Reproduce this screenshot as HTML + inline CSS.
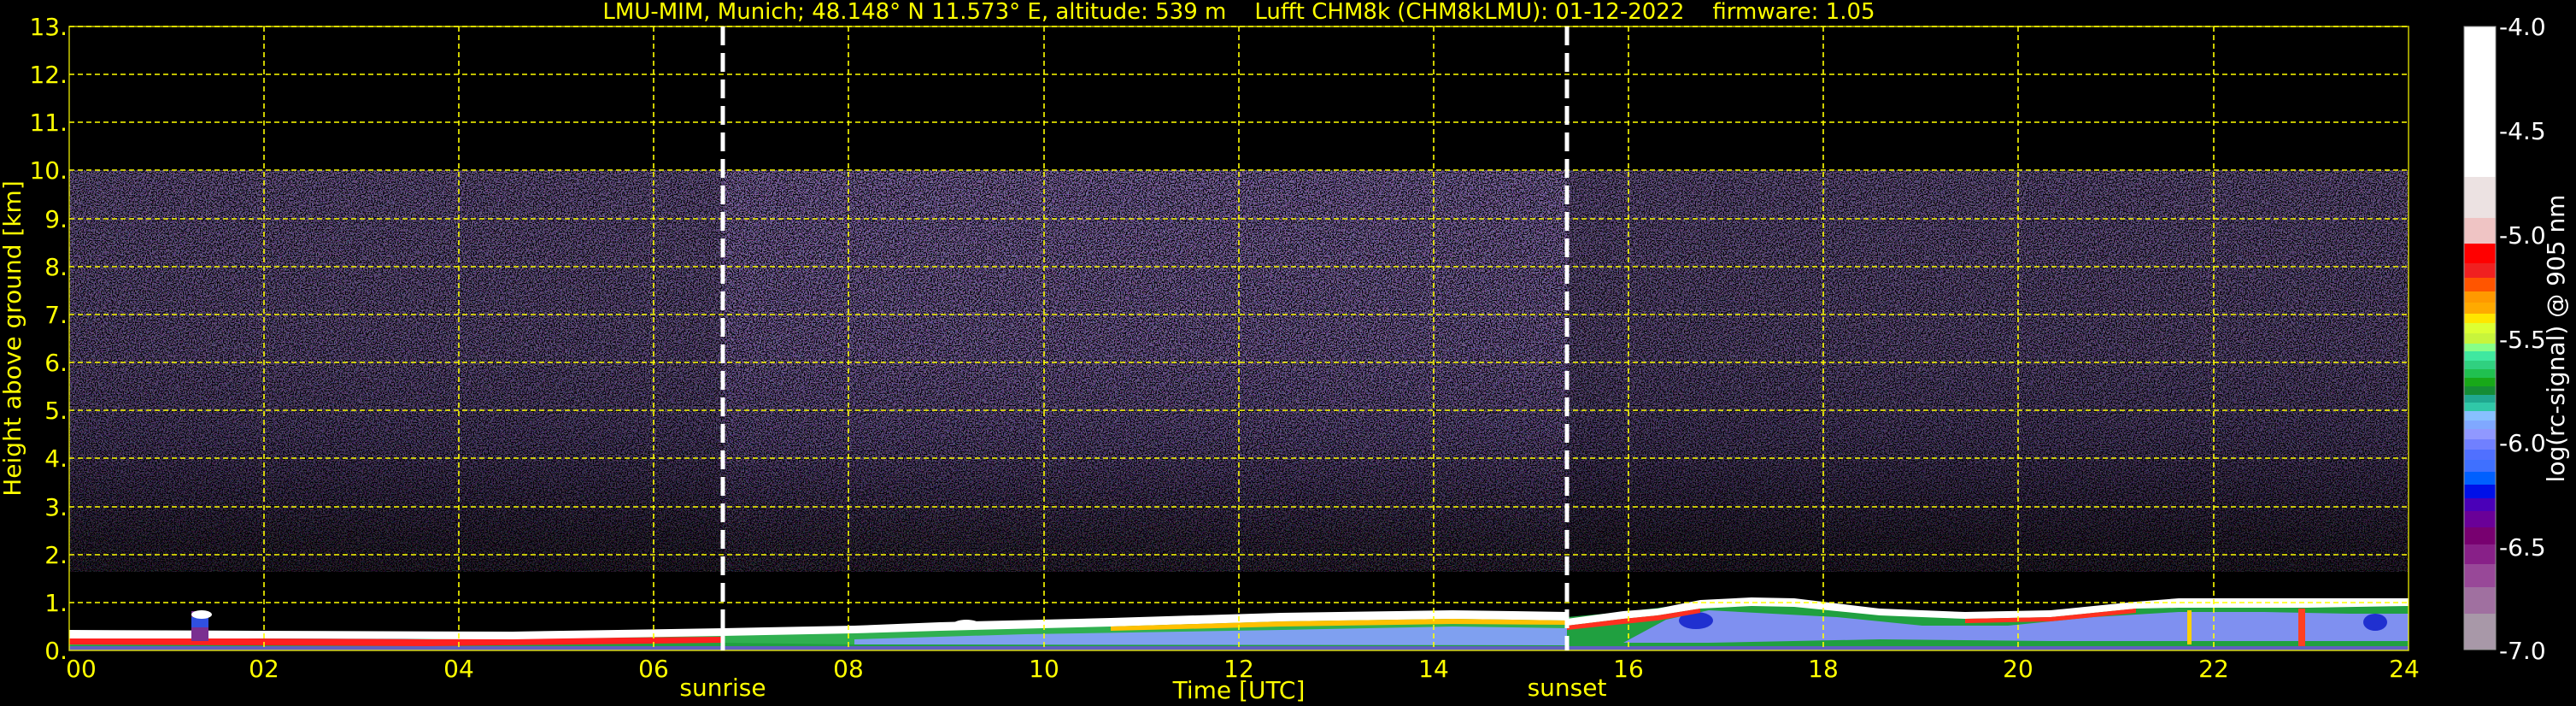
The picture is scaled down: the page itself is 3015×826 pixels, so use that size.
<!DOCTYPE html>
<html><head><meta charset="utf-8"><style>
html,body{margin:0;padding:0;background:#000;}
body{width:3015px;height:826px;overflow:hidden;position:relative;font-family:"DejaVu Sans","Liberation Sans",sans-serif;}
svg{position:absolute;left:0;top:0;}
</style></head><body>
<svg width="3015" height="826" viewBox="0 0 3015 826" xmlns="http://www.w3.org/2000/svg" font-family="DejaVu Sans, Liberation Sans, sans-serif">
<defs>
<linearGradient id="ng" x1="0" y1="0" x2="0" y2="1">
<stop offset="0" stop-color="#6a5890"/>
<stop offset="0.45" stop-color="#5a4a7e"/>
<stop offset="0.66" stop-color="#403460"/>
<stop offset="0.8" stop-color="#221a36"/>
<stop offset="0.92" stop-color="#0a0810"/>
<stop offset="1" stop-color="#000"/>
</linearGradient>
<filter id="sp" x="0" y="0" width="100%" height="100%">
<feTurbulence type="fractalNoise" baseFrequency="0.7" numOctaves="1" seed="5"/>
<feColorMatrix type="matrix" values="0 0 0 0 0  0 0 0 0 0  0 0 0 0 0  9 0 0 0 -4.3"/>
</filter>
<filter id="cs" x="0" y="0" width="100%" height="100%">
<feTurbulence type="fractalNoise" baseFrequency="0.8" numOctaves="1" seed="11"/>
<feColorMatrix type="matrix" values="4 0 0 0 -1.5  0 4 0 0 -1.7  0 0 4 0 -1.3  0 0 0 0 0.5"/>
</filter>
</defs>
<rect x="81" y="199" width="2738" height="470" fill="url(#ng)"/>
<rect x="81" y="199" width="2738" height="470" filter="url(#cs)" opacity="0.5"/>
<rect x="81" y="199" width="2738" height="470" filter="url(#sp)"/>
<rect x="81" y="199" width="765" height="470" fill="#000" opacity="0.15"/>
<rect x="1834" y="199" width="985" height="470" fill="#000" opacity="0.18"/>

<!-- boundary layer: left part -->
<polygon points="81,761 81,748 400,749 700,745 846,742 1000,738 1100,735 1300,730 1500,725 1700,722 1834,724 1834,761" fill="#30b050"/>
<polygon points="1000,761 1000,748 1200,742 1500,737 1700,733 1834,735 1834,761" fill="#7fa0f0"/>
<polygon points="81,761 81,755 846,752 1000,754 1834,755 1834,761" fill="#20a040"/>
<polygon points="81,754 81,746 500,748 846,745 846,752 500,756" fill="#ff2020"/>
<polygon points="81,747 81,737 300,738 600,739 846,735 1000,732 1100,728 1300,723 1500,717 1700,714 1834,716 1834,726 1700,724 1500,727 1300,733 1100,738 1000,741 846,744 600,748 300,747" fill="#ffffff"/>
<polygon points="1300,733 1500,727 1700,724 1834,726 1834,731 1700,730 1500,733 1300,738" fill="#ffc000"/>
<rect x="224" y="715" width="20" height="35" fill="#7a2f90"/>
<rect x="224" y="722" width="20" height="12" fill="#3050e0"/>
<ellipse cx="236" cy="719" rx="12" ry="5" fill="#fff"/>
<ellipse cx="1131" cy="731" rx="16" ry="6" fill="#fff"/>
<!-- right part -->
<polygon points="1834,761 1834,722 1900,716 1950,710 1990,706 2050,704 2100,705 2200,718 2300,722 2400,720 2500,710 2550,705 2700,705 2819,705 2819,761" fill="#20a040"/>
<polygon points="1900,752 1950,725 2000,714 2150,722 2250,732 2350,732 2450,722 2550,716 2650,716 2750,718 2819,718 2819,750 2400,750 2200,748 2000,752" fill="#7f90f0"/>
<ellipse cx="1985" cy="726" rx="20" ry="10" fill="#2030d0"/>
<ellipse cx="2780" cy="728" rx="14" ry="10" fill="#2030d0"/>
<polygon points="1834,724 1900,715 1940,712 1990,702 2050,699 2100,700 2200,712 2300,716 2400,714 2500,704 2550,700 2700,700 2819,700 2819,709 2700,711 2550,711 2500,712 2400,722 2300,724 2200,720 2100,710 2050,709 1990,712 1940,720 1900,724 1834,732" fill="#ffffff"/>
<polygon points="1834,732 1900,724 1940,720 1990,712 1990,717 1940,726 1900,730 1834,737" fill="#ff3020"/>
<polygon points="2300,724 2400,722 2500,712 2500,717 2400,727 2300,729" fill="#ff3020"/>
<rect x="2690" y="712" width="8" height="44" fill="#ff4020"/>
<rect x="2560" y="714" width="5" height="40" fill="#ffd000"/>
<rect x="81" y="756" width="2738" height="5" fill="#6060c0"/>

<!-- grid -->
<g stroke="#ffff00" stroke-width="1.6" stroke-dasharray="6,4" fill="none">
<line x1="81" y1="31" x2="2819" y2="31"/><line x1="81" y1="87" x2="2819" y2="87"/><line x1="81" y1="143" x2="2819" y2="143"/><line x1="81" y1="199" x2="2819" y2="199"/><line x1="81" y1="256" x2="2819" y2="256"/><line x1="81" y1="312" x2="2819" y2="312"/><line x1="81" y1="368" x2="2819" y2="368"/><line x1="81" y1="424" x2="2819" y2="424"/><line x1="81" y1="480" x2="2819" y2="480"/><line x1="81" y1="536" x2="2819" y2="536"/><line x1="81" y1="593" x2="2819" y2="593"/><line x1="81" y1="649" x2="2819" y2="649"/><line x1="81" y1="705" x2="2819" y2="705"/>
<line x1="309" y1="31" x2="309" y2="761"/><line x1="537" y1="31" x2="537" y2="761"/><line x1="765" y1="31" x2="765" y2="761"/><line x1="993" y1="31" x2="993" y2="761"/><line x1="1222" y1="31" x2="1222" y2="761"/><line x1="1450" y1="31" x2="1450" y2="761"/><line x1="1678" y1="31" x2="1678" y2="761"/><line x1="1906" y1="31" x2="1906" y2="761"/><line x1="2134" y1="31" x2="2134" y2="761"/><line x1="2362" y1="31" x2="2362" y2="761"/><line x1="2591" y1="31" x2="2591" y2="761"/>
</g>
<rect x="81" y="31" width="2738" height="730" fill="none" stroke="#ffff00" stroke-width="1.5" opacity="0.8"/>
<g stroke="#fff" stroke-width="5" stroke-dasharray="22,9">
<line x1="846" y1="31" x2="846" y2="761"/><line x1="1834" y1="31" x2="1834" y2="761"/>
</g>

<g fill="#ffff00" font-size="28" text-anchor="end">
<text x="79" y="41">13.</text><text x="79" y="97">12.</text><text x="79" y="153">11.</text><text x="79" y="209">10.</text><text x="79" y="266">9.</text><text x="79" y="322">8.</text><text x="79" y="378">7.</text><text x="79" y="434">6.</text><text x="79" y="490">5.</text><text x="79" y="546">4.</text><text x="79" y="603">3.</text><text x="79" y="659">2.</text><text x="79" y="715">1.</text><text x="79" y="771">0.</text>
</g>
<g fill="#ffff00" font-size="28" text-anchor="middle">
<text x="95" y="792">00</text><text x="309" y="792">02</text><text x="537" y="792">04</text><text x="765" y="792">06</text><text x="993" y="792">08</text><text x="1222" y="792">10</text><text x="1450" y="792">12</text><text x="1678" y="792">14</text><text x="1906" y="792">16</text><text x="2134" y="792">18</text><text x="2362" y="792">20</text><text x="2591" y="792">22</text><text x="2814" y="792">24</text>
<text x="846" y="814">sunrise</text><text x="1834" y="814">sunset</text>
<text x="1450" y="817">Time [UTC]</text>
<text x="1450" y="22" font-size="26" xml:space="preserve">LMU-MIM, Munich; 48.148° N 11.573° E, altitude: 539 m    Lufft CHM8k (CHM8kLMU): 01-12-2022    firmware: 1.05</text>
<text transform="translate(24,396) rotate(-90)">Height above ground [km]</text>
</g>

<g>
<rect x="2884" y="31" width="37" height="176" fill="#fff"/>
<rect x="2884" y="207" width="37" height="48" fill="#ece2e2"/>
<rect x="2884" y="255" width="37" height="30" fill="#efc4c4"/>
<rect x="2884" y="285" width="37" height="23" fill="#ff0000"/>
<rect x="2884" y="308" width="37" height="17" fill="#f02020"/>
<rect x="2884" y="325" width="37" height="16" fill="#ff5500"/>
<rect x="2884" y="341" width="37" height="13" fill="#ff9900"/>
<rect x="2884" y="354" width="37" height="13" fill="#ffaa00"/>
<rect x="2884" y="367" width="37" height="11" fill="#ffe600"/>
<rect x="2884" y="378" width="37" height="12" fill="#ddff33"/>
<rect x="2884" y="390" width="37" height="12" fill="#c8f53c"/>
<rect x="2884" y="402" width="37" height="9" fill="#88ff88"/>
<rect x="2884" y="411" width="37" height="11" fill="#40e8a0"/>
<rect x="2884" y="422" width="37" height="10" fill="#30d080"/>
<rect x="2884" y="432" width="37" height="10" fill="#20c050"/>
<rect x="2884" y="442" width="37" height="10" fill="#18a818"/>
<rect x="2884" y="452" width="37" height="10" fill="#158c35"/>
<rect x="2884" y="462" width="37" height="9" fill="#20a890"/>
<rect x="2884" y="471" width="37" height="10" fill="#30c8a8"/>
<rect x="2884" y="481" width="37" height="11" fill="#88c0ff"/>
<rect x="2884" y="492" width="37" height="10" fill="#80a8ff"/>
<rect x="2884" y="502" width="37" height="12" fill="#9098ff"/>
<rect x="2884" y="514" width="37" height="12" fill="#7080ff"/>
<rect x="2884" y="526" width="37" height="12" fill="#5070ff"/>
<rect x="2884" y="538" width="37" height="14" fill="#3f70ff"/>
<rect x="2884" y="552" width="37" height="15" fill="#0060ff"/>
<rect x="2884" y="567" width="37" height="16" fill="#0010e8"/>
<rect x="2884" y="583" width="37" height="15" fill="#4a00b8"/>
<rect x="2884" y="598" width="37" height="19" fill="#6a0098"/>
<rect x="2884" y="617" width="37" height="20" fill="#780070"/>
<rect x="2884" y="637" width="37" height="23" fill="#882088"/>
<rect x="2884" y="660" width="37" height="27" fill="#984898"/>
<rect x="2884" y="687" width="37" height="31" fill="#a070a0"/>
<rect x="2884" y="718" width="37" height="42" fill="#a898a8"/>
<rect x="2884" y="31" width="37" height="729" fill="none" stroke="#999" stroke-width="1"/>
</g>
<g fill="#fff" font-size="28">
<text x="2925" y="41">-4.0</text><text x="2925" y="163">-4.5</text><text x="2925" y="285">-5.0</text><text x="2925" y="407">-5.5</text><text x="2925" y="528">-6.0</text><text x="2925" y="650">-6.5</text><text x="2925" y="771">-7.0</text>
<text transform="translate(3001,396) rotate(-90)" text-anchor="middle">log(rc-signal) @ 905 nm</text>
</g>
</svg>
</body></html>
